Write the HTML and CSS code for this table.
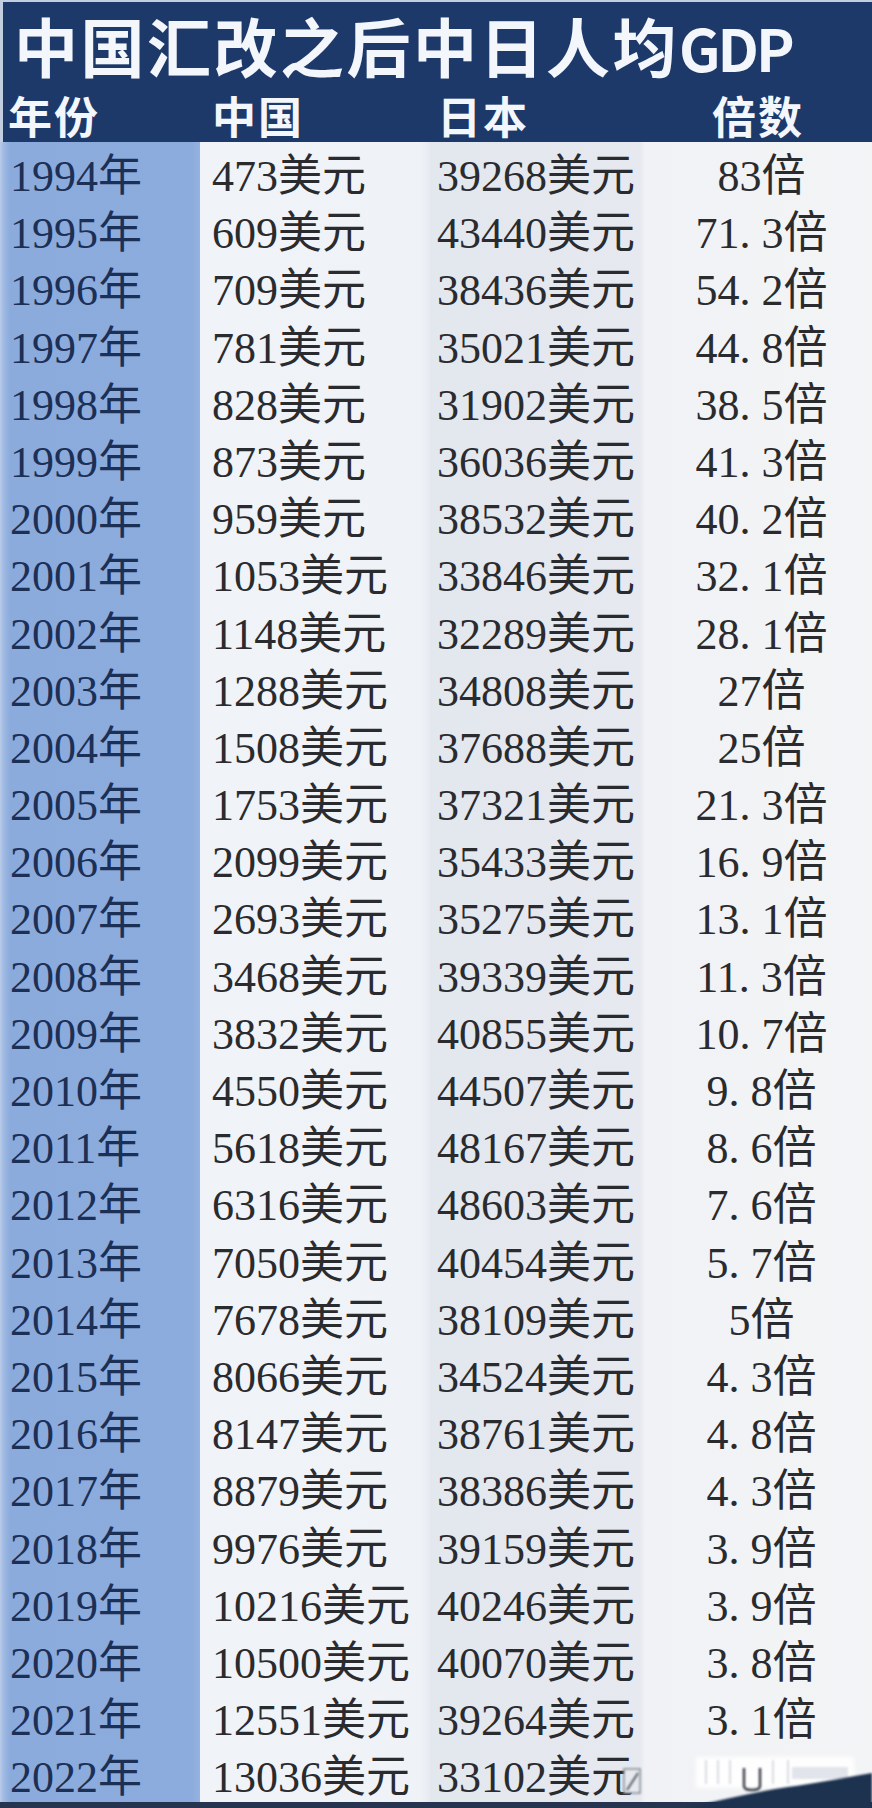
FILE: index.html
```html
<!DOCTYPE html>
<html lang="zh-CN">
<head>
<meta charset="utf-8">
<title>中国汇改之后中日人均GDP</title>
<link rel="stylesheet" href="styles.css">
</head>
<body>
<div class="sheet">
  <header class="head">
    <h1 class="title">中国汇改之后中日人均<span class="latin">GDP</span></h1>
    <div class="grid cols">
      <div class="h h1">年份</div>
      <div class="h h2">中国</div>
      <div class="h h3">日本</div>
      <div class="h h4">倍数</div>
    </div>
  </header>
  <div class="body">
    <div class="grid row"><div class="c year">1994年</div><div class="c cn">473美元</div><div class="c jp">39268美元</div><div class="c mul">83倍</div></div>
    <div class="grid row"><div class="c year">1995年</div><div class="c cn">609美元</div><div class="c jp">43440美元</div><div class="c mul">71<span class="dot">.</span>3倍</div></div>
    <div class="grid row"><div class="c year">1996年</div><div class="c cn">709美元</div><div class="c jp">38436美元</div><div class="c mul">54<span class="dot">.</span>2倍</div></div>
    <div class="grid row"><div class="c year">1997年</div><div class="c cn">781美元</div><div class="c jp">35021美元</div><div class="c mul">44<span class="dot">.</span>8倍</div></div>
    <div class="grid row"><div class="c year">1998年</div><div class="c cn">828美元</div><div class="c jp">31902美元</div><div class="c mul">38<span class="dot">.</span>5倍</div></div>
    <div class="grid row"><div class="c year">1999年</div><div class="c cn">873美元</div><div class="c jp">36036美元</div><div class="c mul">41<span class="dot">.</span>3倍</div></div>
    <div class="grid row"><div class="c year">2000年</div><div class="c cn">959美元</div><div class="c jp">38532美元</div><div class="c mul">40<span class="dot">.</span>2倍</div></div>
    <div class="grid row"><div class="c year">2001年</div><div class="c cn">1053美元</div><div class="c jp">33846美元</div><div class="c mul">32<span class="dot">.</span>1倍</div></div>
    <div class="grid row"><div class="c year">2002年</div><div class="c cn">1148美元</div><div class="c jp">32289美元</div><div class="c mul">28<span class="dot">.</span>1倍</div></div>
    <div class="grid row"><div class="c year">2003年</div><div class="c cn">1288美元</div><div class="c jp">34808美元</div><div class="c mul">27倍</div></div>
    <div class="grid row"><div class="c year">2004年</div><div class="c cn">1508美元</div><div class="c jp">37688美元</div><div class="c mul">25倍</div></div>
    <div class="grid row"><div class="c year">2005年</div><div class="c cn">1753美元</div><div class="c jp">37321美元</div><div class="c mul">21<span class="dot">.</span>3倍</div></div>
    <div class="grid row"><div class="c year">2006年</div><div class="c cn">2099美元</div><div class="c jp">35433美元</div><div class="c mul">16<span class="dot">.</span>9倍</div></div>
    <div class="grid row"><div class="c year">2007年</div><div class="c cn">2693美元</div><div class="c jp">35275美元</div><div class="c mul">13<span class="dot">.</span>1倍</div></div>
    <div class="grid row"><div class="c year">2008年</div><div class="c cn">3468美元</div><div class="c jp">39339美元</div><div class="c mul">11<span class="dot">.</span>3倍</div></div>
    <div class="grid row"><div class="c year">2009年</div><div class="c cn">3832美元</div><div class="c jp">40855美元</div><div class="c mul">10<span class="dot">.</span>7倍</div></div>
    <div class="grid row"><div class="c year">2010年</div><div class="c cn">4550美元</div><div class="c jp">44507美元</div><div class="c mul">9<span class="dot">.</span>8倍</div></div>
    <div class="grid row"><div class="c year">2011年</div><div class="c cn">5618美元</div><div class="c jp">48167美元</div><div class="c mul">8<span class="dot">.</span>6倍</div></div>
    <div class="grid row"><div class="c year">2012年</div><div class="c cn">6316美元</div><div class="c jp">48603美元</div><div class="c mul">7<span class="dot">.</span>6倍</div></div>
    <div class="grid row"><div class="c year">2013年</div><div class="c cn">7050美元</div><div class="c jp">40454美元</div><div class="c mul">5<span class="dot">.</span>7倍</div></div>
    <div class="grid row"><div class="c year">2014年</div><div class="c cn">7678美元</div><div class="c jp">38109美元</div><div class="c mul">5倍</div></div>
    <div class="grid row"><div class="c year">2015年</div><div class="c cn">8066美元</div><div class="c jp">34524美元</div><div class="c mul">4<span class="dot">.</span>3倍</div></div>
    <div class="grid row"><div class="c year">2016年</div><div class="c cn">8147美元</div><div class="c jp">38761美元</div><div class="c mul">4<span class="dot">.</span>8倍</div></div>
    <div class="grid row"><div class="c year">2017年</div><div class="c cn">8879美元</div><div class="c jp">38386美元</div><div class="c mul">4<span class="dot">.</span>3倍</div></div>
    <div class="grid row"><div class="c year">2018年</div><div class="c cn">9976美元</div><div class="c jp">39159美元</div><div class="c mul">3<span class="dot">.</span>9倍</div></div>
    <div class="grid row"><div class="c year">2019年</div><div class="c cn">10216美元</div><div class="c jp">40246美元</div><div class="c mul">3<span class="dot">.</span>9倍</div></div>
    <div class="grid row"><div class="c year">2020年</div><div class="c cn">10500美元</div><div class="c jp">40070美元</div><div class="c mul">3<span class="dot">.</span>8倍</div></div>
    <div class="grid row"><div class="c year">2021年</div><div class="c cn">12551美元</div><div class="c jp">39264美元</div><div class="c mul">3<span class="dot">.</span>1倍</div></div>
    <div class="grid row"><div class="c year">2022年</div><div class="c cn">13036美元</div><div class="c jp">33102美元</div><div class="c mul"></div></div>
  </div>
  <svg class="watermark" width="280" height="70" viewBox="0 0 280 70" aria-hidden="true">
    <defs>
      <filter id="blur" x="-20%" y="-50%" width="140%" height="200%"><feGaussianBlur stdDeviation="2.2"/></filter>
      <filter id="soft" x="-20%" y="-50%" width="140%" height="200%"><feGaussianBlur stdDeviation="0.8"/></filter>
    </defs>
    <rect x="104" y="19" width="158" height="31" fill="#ffffff" opacity="0.95" filter="url(#blur)"/>
    <g stroke="#d9dde3" stroke-width="2" filter="url(#soft)">
      <line x1="114" y1="22" x2="114" y2="46"/>
      <line x1="126" y1="22" x2="126" y2="46"/>
      <line x1="138" y1="22" x2="138" y2="46"/>
      <line x1="181" y1="22" x2="181" y2="46"/>
      <line x1="196" y1="22" x2="196" y2="46"/>
    </g>
    <rect x="200" y="29" width="56" height="12" fill="#e1e4ea" filter="url(#soft)"/>
    <path d="M152 30 L152 48 Q152 52 160 52 Q168 52 168 48 L168 30" fill="none" stroke="#3a3f48" stroke-width="2.5" filter="url(#soft)"/>
    <rect x="32" y="31" width="16" height="24" fill="#e6e9ee" stroke="#7b828c" stroke-width="1.5" filter="url(#soft)"/>
    <line x1="35" y1="52" x2="46" y2="35" stroke="#555b63" stroke-width="2" filter="url(#soft)"/>
    <path d="M95 70 C 128 62, 162 54, 196 49 C 226 45, 252 40, 280 35 L280 70 Z" fill="#1f3050" filter="url(#soft)"/>
  </svg>
</div>
</body>
</html>
```

FILE: styles.css
```css
* { box-sizing: border-box; }

html, body {
  margin: 0;
  padding: 0;
  background: #1f2b42;
}

.sheet {
  position: relative;
  width: 872px;
  height: 1808px;
  overflow: hidden;
  background: #eef1f5;
}

.sheet::after {
  content: "";
  position: absolute;
  left: 0;
  right: 0;
  bottom: 0;
  height: 6px;
  background: #26344f;
}

.head {
  height: 142px;
  background: #1d396a;
  box-shadow: inset 3px 2px 0 #c3cee0;
  color: #f3f6fb;
  font-family: "Liberation Sans", "Noto Sans CJK SC", sans-serif;
  font-weight: 700;
}

.title {
  margin: 0;
  padding: 12px 0 0 14px;
  height: 89px;
  font-size: 64px;
  line-height: 77px;
  letter-spacing: 2.5px;
  font-weight: 700;
  white-space: nowrap;
}

.title .latin {
  font-family: "Noto Sans CJK SC", "Noto Sans", sans-serif;
  font-size: 58px;
  line-height: 1;
  letter-spacing: -3px;
}

.grid {
  display: grid;
  grid-template-columns: 200px 230px 215px 1fr;
}

.cols {
  height: 53px;
  padding-top: 6px;
  font-size: 44px;
  line-height: 47px;
  letter-spacing: 2px;
  white-space: nowrap;
}

.h1 { padding-left: 8px; }
.h2 { padding-left: 12px; }
.h3 { padding-left: 7px; }
.h4 { padding-left: 67px; }

.body {
  padding-top: 6px;
  background: linear-gradient(to right,
    #b9cbe7 0, #9db9e3 4px, #8cabdd 10px, #8dacde 192px, #95b2e0 200px,
    #f0f3f8 200px, #eff2f7 420px, #e7eaf0 430px,
    #e3e7ee 430px, #e6e9ef 640px,
    #f1f2f5 645px, #f3f4f6 872px);
  font-family: "Liberation Serif", "Noto Sans CJK SC", serif;
  font-size: 44px;
  color: #2a2b2e;
}

.row {
  height: 57.2px;
  line-height: 57.2px;
  white-space: nowrap;
}

.c { overflow: visible; }

.year {
  padding-left: 10px;
  color: #1c2f55;
}

.cn { padding-left: 12px; }
.jp { padding-left: 7px; }

.mul {
  text-align: center;
  padding-left: 6px;
}

.dot {
  display: inline-block;
  width: 0.5em;
  text-align: left;
}

.watermark {
  position: absolute;
  right: 0;
  bottom: 0;
  z-index: 1;
}
```
